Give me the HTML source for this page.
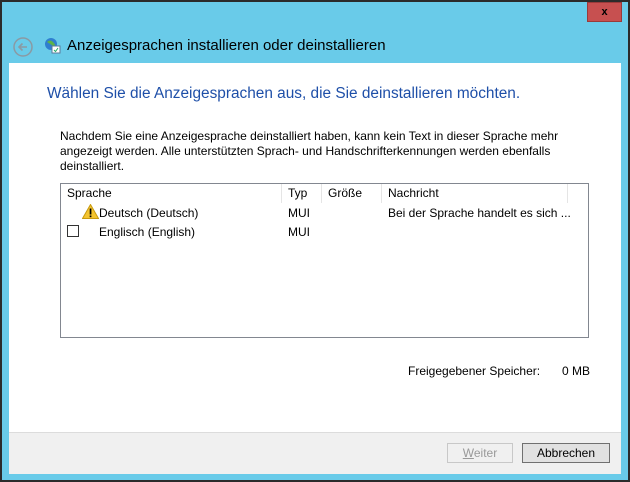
<!DOCTYPE html>
<html><head><style>
body{margin:0;width:630px;height:482px;background:#2b2b2b;position:relative;overflow:hidden;font-family:"Liberation Sans",sans-serif;}
.frame{position:absolute;left:2px;top:2px;width:626px;height:478px;background:#69cbe9;}
.close{position:absolute;left:587px;top:2px;width:35px;height:20px;background:#c75050;border:1px solid #9a3a3a;box-sizing:border-box;color:#000;font-weight:bold;font-size:11px;text-align:center;line-height:18px;}
.content{position:absolute;left:9px;top:63px;width:612px;height:410px;background:#fff;}
.footer{position:absolute;left:0;top:369px;width:612px;height:41px;background:#f0f0f0;border-top:1px solid #dcdcdc;}
.t{position:absolute;white-space:nowrap;}
.btn{position:absolute;height:20px;box-sizing:border-box;font-size:12px;text-align:center;line-height:18px;}
.list{position:absolute;left:51px;top:120px;width:527px;height:153px;border:1px solid #828790;background:#fff;font-size:12px;}
.hdr{position:absolute;top:0;height:19px;border-right:1px solid #e5e5e5;box-sizing:border-box;line-height:19px;padding-left:6px;color:#000;}
</style></head><body>
<div class="frame"></div>
<div class="close">x</div>
<svg style="position:absolute;left:12px;top:36px" width="22" height="22"><circle cx="11" cy="11" r="9" fill="none" stroke="#8a9aa4" stroke-width="1.5"/><path d="M15 11H7M10.5 7.5L7 11l3.5 3.5" fill="none" stroke="#8a9aa4" stroke-width="1.6"/></svg>
<svg style="position:absolute;left:44px;top:37px" width="17" height="17"><circle cx="7" cy="7" r="6" fill="#2f7fd0"/><path d="M3 5q3-3 6 0t2 5" fill="#5cb34a"/><rect x="8" y="9" width="8" height="7" fill="#fff" stroke="#5a7a9a"/><path d="M10 13l1.5 1.5L14 11" stroke="#2a6" fill="none"/></svg>
<div class="t" style="left:67px;top:37px;font-size:15px;color:#000">Anzeigesprachen installieren oder deinstallieren</div>
<div class="content">
<div class="t" style="left:38px;top:22px;font-size:15.4px;color:#1e4fa8">Wählen Sie die Anzeigesprachen aus, die Sie deinstallieren möchten.</div>
<div class="t" style="left:51px;top:66px;font-size:12px;line-height:15px;color:#000">Nachdem Sie eine Anzeigesprache deinstalliert haben, kann kein Text in dieser Sprache mehr<br>angezeigt werden. Alle unterstützten Sprach- und Handschrifterkennungen werden ebenfalls<br>deinstalliert.</div>
<div class="list">
<div class="hdr" style="left:0;width:221px">Sprache</div>
<div class="hdr" style="left:221px;width:40px">Typ</div>
<div class="hdr" style="left:261px;width:60px">Größe</div>
<div class="hdr" style="left:321px;width:186px">Nachricht</div>
<svg style="position:absolute;left:21px;top:20px" width="17" height="15"><path d="M8.5 0.5L16.5 14.5H0.5Z" fill="#f4c430" stroke="#c89a10"/><rect x="7.7" y="4.5" width="1.7" height="6" fill="#000"/><rect x="7.7" y="11.5" width="1.7" height="1.7" fill="#000"/></svg>
<div class="t" style="left:38px;top:22px">Deutsch (Deutsch)</div>
<div class="t" style="left:227px;top:22px">MUI</div>
<div class="t" style="left:327px;top:22px">Bei der Sprache handelt es sich ...</div>
<div style="position:absolute;left:6px;top:41px;width:12px;height:12px;border:1px solid #333;box-sizing:border-box"></div>
<div class="t" style="left:38px;top:41px">Englisch (English)</div>
<div class="t" style="left:227px;top:41px">MUI</div>
</div>
<div class="t" style="left:399px;top:301px;font-size:12px">Freigegebener Speicher:</div>
<div class="t" style="left:553px;top:301px;font-size:12px">0 MB</div>
<div class="footer">
<div class="btn" style="left:438px;top:10px;width:66px;border:1px solid #c8c8c8;color:#999;background:#f0f0f0"><u>W</u>eiter</div>
<div class="btn" style="left:513px;top:10px;width:88px;border:1px solid #707070;background:#e1e1e1;color:#000">Abbrechen</div>
</div>
</div>
</body></html>
